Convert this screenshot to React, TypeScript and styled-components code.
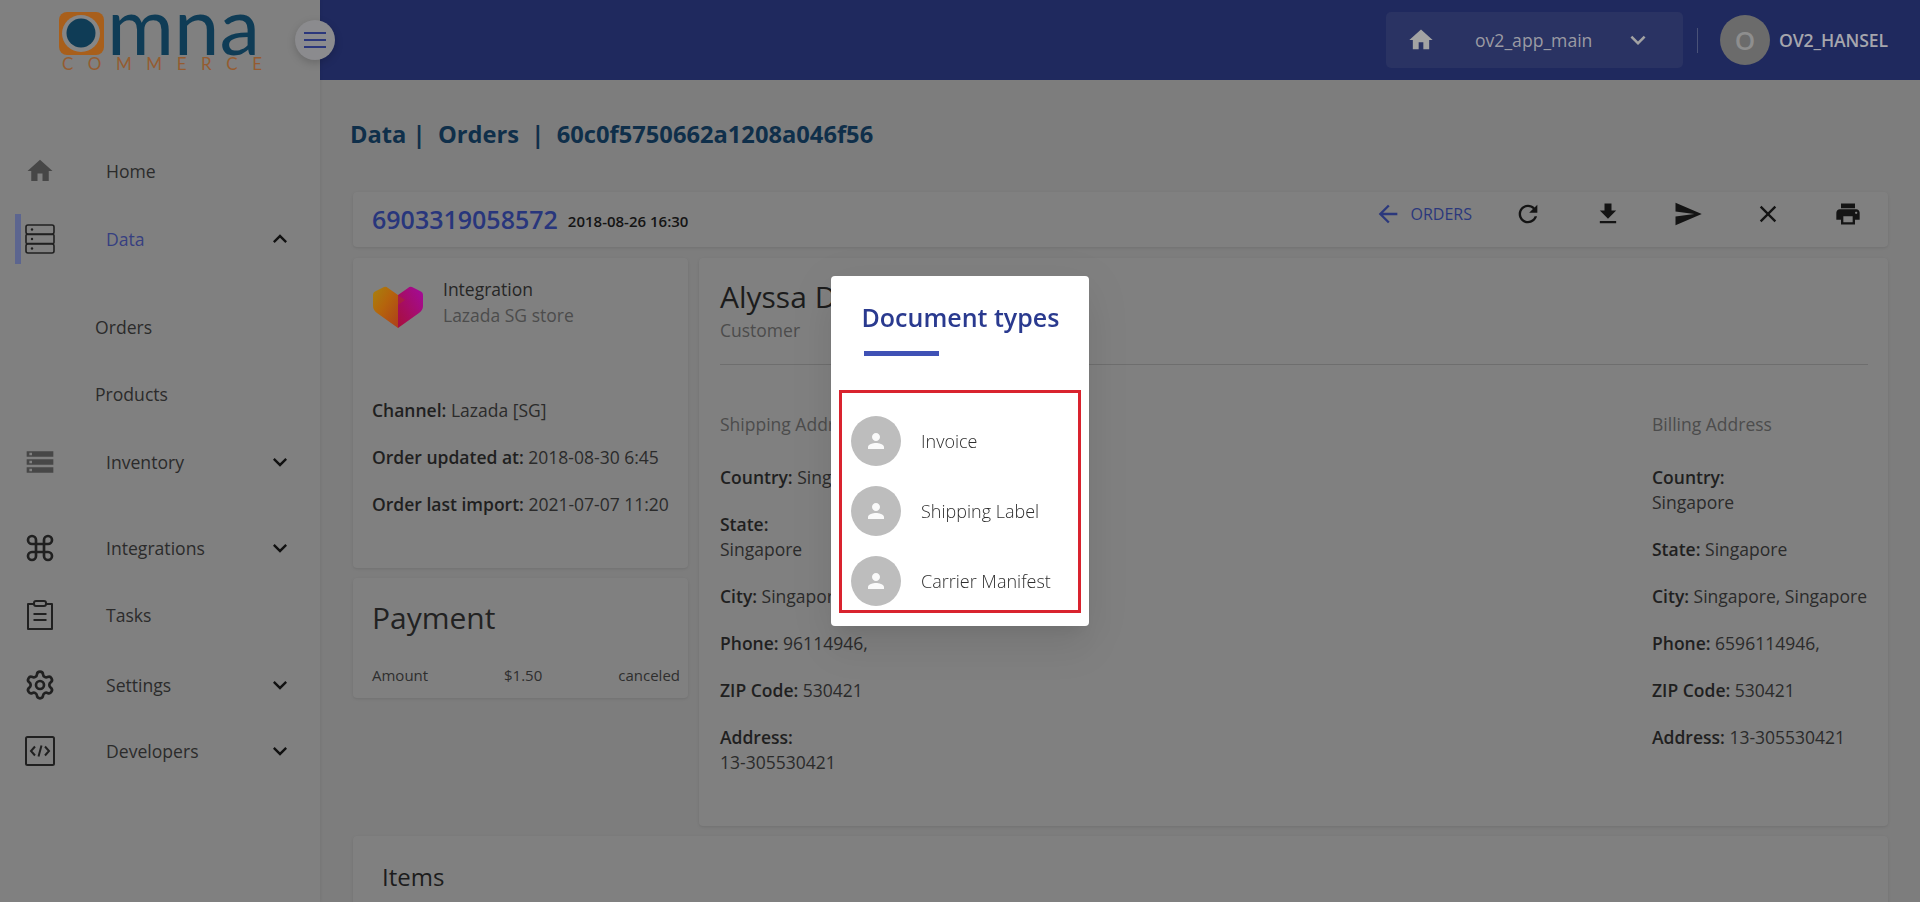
import React from "react";
import styled, { createGlobalStyle } from "styled-components";
import { Settings, Command } from "lucide-react";

const GlobalStyle = createGlobalStyle`
  html, body {
    margin: 0;
    padding: 0;
    height: 902px;
    overflow: hidden;
    background: #7d7d7d;
    font-family: "Open Sans", "Liberation Sans", sans-serif;
    color: #262626;
  }
  * {
    box-sizing: border-box;
  }
`;

const Page = styled.div`
  display: flex;
  width: 1920px;
  height: 902px;
  overflow: hidden;
`;

const Sidebar = styled.aside`
  position: relative;
  width: 320px;
  flex-shrink: 0;
  background: #808080;
  box-shadow: 1px 0 3px rgba(0, 0, 0, 0.06);
  z-index: 1;
`;

const LogoBox = styled.div`
  height: 137px;
  padding: 11px 0 0 58px;
`;

const MenuButton = styled.div`
  position: absolute;
  top: 20px;
  left: 295px;
  width: 40px;
  height: 40px;
  border-radius: 50%;
  background: #8b8b8e;
  box-shadow: 0 3px 8px rgba(0, 0, 0, 0.18);
  display: flex;
  align-items: center;
  justify-content: center;
  color: #2b377c;
`;

const NavRow = styled.div<{ $h: number; $top?: number; $sub?: boolean }>`
  display: flex;
  align-items: center;
  height: ${(p) => p.$h}px;
  margin-top: ${(p) => p.$top || 0}px;
  padding-left: ${(p) => (p.$sub ? 95 : 0)}px;
  padding-right: 26px;
  position: relative;
`;

const ActiveBar = styled.span`
  position: absolute;
  left: 15px;
  top: 9px;
  width: 6px;
  height: 50px;
  background: #5c658f;
`;

const NavIcon = styled.span<{ $soft?: boolean }>`
  width: 80px;
  margin-right: 26px;
  display: flex;
  justify-content: center;
  color: ${(p) => (p.$soft ? "#474747" : "#202020")};
`;

const NavLabel = styled.span<{ $active?: boolean }>`
  font-size: 17.6px;
  font-weight: 400;
  color: ${(p) => (p.$active ? "#363f80" : "#2b2b2b")};
`;

const NavChevron = styled.span`
  margin-left: auto;
  display: flex;
  color: #111;
`;

const Main = styled.main`
  flex: 1;
  min-width: 0;
  display: flex;
  flex-direction: column;
`;

const Header = styled.header`
  height: 80px;
  flex-shrink: 0;
  background: #1f295e;
  display: flex;
  align-items: center;
  justify-content: flex-end;
  padding-right: 32px;
`;

const AppSelect = styled.div`
  width: 297px;
  height: 56px;
  border-radius: 5px;
  background: #2a3363;
  display: flex;
  align-items: center;
  padding-left: 21px;
  color: #a3a3a3;
`;

const AppName = styled.span`
  font-size: 17.6px;
  margin-left: 40px;
  width: 148px;
  color: #9b9ba3;
`;

const HeaderDivider = styled.span`
  width: 1px;
  height: 25px;
  background: #4a5278;
  margin: 0 22px 0 14px;
`;

const UserAvatar = styled.div`
  width: 50px;
  height: 50px;
  border-radius: 50%;
  background: #6b6b6b;
  color: #8e8e8e;
  font-size: 26px;
  font-weight: 600;
  display: flex;
  align-items: center;
  justify-content: center;
  margin-right: 9px;
`;

const UserName = styled.span`
  font-size: 17.6px;
  font-weight: 600;
  color: #a6a6ad;
  letter-spacing: -0.1px;
`;

const Content = styled.div`
  padding: 39px 32px 0 33px;
`;

const Crumbs = styled.h2`
  margin: 0 0 43px -3px;
  font-size: 23.7px;
  line-height: 30px;
  font-weight: 700;
  color: #0f2f4a;
  white-space: pre;
`;

const Card = styled.section<{ $h?: number }>`
  background: #808080;
  border-radius: 4px;
  box-shadow: 0 1px 3px rgba(0, 0, 0, 0.1);
  ${(p) => (p.$h ? `height: ${p.$h}px;` : "")}
`;

const ToolbarCard = styled(Card)`
  height: 55px;
  display: flex;
  align-items: flex-start;
  padding-left: 19px;
`;

const OrderId = styled.span`
  font-size: 25px;
  line-height: 54px;
  font-weight: 600;
  color: #28367c;
`;

const OrderDate = styled.span`
  font-size: 15px;
  line-height: 54px;
  font-weight: 600;
  color: #141414;
  margin: 2px 0 0 10px;
`;

const ToolbarActions = styled.div`
  margin-left: auto;
  display: flex;
  height: 44px;
  align-items: center;
`;

const BackLink = styled.span`
  display: flex;
  align-items: center;
  gap: 9px;
  color: #2b387c;
  font-size: 16px;
  font-weight: 500;
  margin-right: 16px;
`;

const ToolButton = styled.span`
  width: 80px;
  display: flex;
  justify-content: center;
  color: #141414;
`;

const Columns = styled.div`
  display: grid;
  grid-template-columns: 335px 1fr;
  gap: 11px;
  margin-top: 11px;
`;

const LeftColumn = styled.div`
  display: flex;
  flex-direction: column;
  gap: 10px;
`;

const IntegrationCard = styled(Card)`
  padding: 22px 19px 0;
`;

const IntegrationHead = styled.div`
  display: flex;
  gap: 19px;
  margin-bottom: 70px;
  padding-top: 6px;
`;

const IntegrationText = styled.div`
  margin-top: -10px;
  font-size: 17.5px;
  line-height: 26px;
`;

const Muted = styled.div`
  color: #4c4c4c;
`;

const Line = styled.div`
  font-size: 17.5px;
  line-height: 25px;
  margin-bottom: 22px;
  color: #2b2b2b;
  white-space: nowrap;
  b {
    font-weight: 600;
    color: #1f1f1f;
  }
`;

const PaymentCard = styled(Card)`
  padding: 20px 8px 0 19px;
`;

const PaymentTitle = styled.h3`
  margin: 0 0 27px;
  font-size: 30px;
  line-height: 40px;
  font-weight: 400;
  color: #222;
`;

const PaymentRow = styled.div`
  display: grid;
  grid-template-columns: 132px 1fr auto;
  font-size: 15px;
  line-height: 20px;
  color: #2e2e2e;
`;

const CustomerCard = styled(Card)`
  padding: 20px 20px 0 21px;
`;

const CustomerName = styled.h3`
  margin: 0;
  font-size: 30px;
  line-height: 38px;
  font-weight: 400;
  color: #1c1c1c;
`;

const CustomerRole = styled(Muted)`
  font-size: 17.5px;
  line-height: 24px;
  margin-top: 2px;
  padding-bottom: 22px;
  border-bottom: 1px solid #6e6e6e;
  margin-bottom: 47px;
`;

const Addresses = styled.div`
  display: flex;
  justify-content: space-between;
`;

const AddressTitle = styled(Muted)`
  font-size: 17.5px;
  line-height: 25px;
  margin-bottom: 28px;
`;

const AddressBlock = styled.div<{ $w: number }>`
  width: ${(p) => p.$w}px;
`;

const ItemsCard = styled(Card)`
  margin-top: 10px;
  height: 120px;
  padding: 27px 29px;
  font-size: 24px;
  line-height: 28px;
  font-weight: 500;
  color: #1c1c1c;
`;

const Backdrop = styled.div`
  position: fixed;
  inset: 0;
  z-index: 5;
`;

const Dialog = styled.div`
  position: absolute;
  left: 831px;
  top: 276px;
  width: 258px;
  height: 350px;
  background: #fff;
  border-radius: 4px;
  box-shadow: 0 11px 15px -7px rgba(0, 0, 0, 0.07),
    0 24px 38px 3px rgba(0, 0, 0, 0.05), 0 9px 46px 8px rgba(0, 0, 0, 0.04);
  padding: 24px 8px 0;
`;

const DialogTitle = styled.h2`
  margin: 0 0 0 22.5px;
  font-size: 25px;
  line-height: 34px;
  font-weight: 600;
  color: #2a3a8f;
  white-space: nowrap;
`;

const DialogRule = styled.div`
  width: 75px;
  height: 5px;
  margin: 17px 0 34px 25px;
  background: #3f51b5;
`;

const DocList = styled.ul`
  list-style: none;
  margin: 0;
  padding: 23px 0 4px 9px;
  height: 223px;
  border: 3px solid #d9232e;
`;

const DocItem = styled.li`
  display: flex;
  align-items: center;
  gap: 20px;
  height: 50px;
  margin-bottom: 20px;
  font-size: 18px;
  font-weight: 300;
  color: #2e2e2e;
  white-space: nowrap;
`;

const DocAvatar = styled.span`
  width: 50px;
  height: 50px;
  border-radius: 50%;
  background: #bdbdbd;
  color: #fafafa;
  display: flex;
  align-items: center;
  justify-content: center;
`;

const M = ({ d, size = 24 }: { d: string; size?: number }) => (
  <svg width={size} height={size} viewBox="0 0 24 24" fill="currentColor">
    <path d={d} />
  </svg>
);

const homePath = "M10 20v-6h4v6h5v-8h3L12 3 2 12h3v8z";
const downPath = "M16.59 8.59L12 13.17 7.41 8.59 6 10l6 6 6-6z";
const upPath = "M12 8l-6 6 1.41 1.41L12 10.83l4.59 4.58L18 14z";

const Logo = () => (
  <svg width="208" height="64" viewBox="0 0 208 64">
    <rect x="1" y="1" width="45" height="43" rx="8" fill="#a85f1b" />
    <ellipse cx="23" cy="22.5" rx="19" ry="18.5" fill="#868686" />
    <circle cx="23" cy="22" r="14.5" fill="#0f3c56" />
    <text
      x="49"
      y="44"
      fontFamily="Lato, sans-serif"
      fontSize="80"
      fill="#0f3c56"
      textLength="153"
      lengthAdjust="spacingAndGlyphs"
    >
      mna
    </text>
    <text
      x="4"
      y="59"
      fontFamily="Lato, sans-serif"
      fontSize="17"
      fill="#955c30"
      textLength="200"
    >
      COMMERCE
    </text>
  </svg>
);

const ServerIcon = () => (
  <svg width="32" height="32" viewBox="0 0 32 32" fill="none" stroke="currentColor" strokeWidth="1.6">
    <rect x="2" y="2" width="28" height="9" rx="2" />
    <rect x="2" y="11.5" width="28" height="9" rx="1" />
    <rect x="2" y="21" width="28" height="9" rx="2" />
    <circle cx="8" cy="6.5" r="1.2" fill="currentColor" stroke="none" />
    <circle cx="8" cy="16" r="1.2" fill="currentColor" stroke="none" />
    <circle cx="8" cy="25.5" r="1.2" fill="currentColor" stroke="none" />
  </svg>
);

const ClipboardIcon = () => (
  <svg width="32" height="32" viewBox="0 0 32 32" fill="none" stroke="currentColor" strokeWidth="2">
    <path d="M10 5H4v25h24V5h-6" strokeLinejoin="round" />
    <rect x="10" y="2" width="12" height="5" rx="2" />
    <path d="M9.5 15h13M9.5 21h13" />
  </svg>
);

const CodeIcon = () => (
  <svg width="32" height="32" viewBox="0 0 32 32" fill="none" stroke="currentColor" strokeWidth="2">
    <rect x="2" y="2" width="28" height="28" rx="1.5" />
    <path d="M11 11.5L7 16l4 4.5M21 11.5l4 4.5-4 4.5M17.5 10.5l-3 11" />
  </svg>
);

const HeartLogo = () => (
  <svg width="52" height="42" viewBox="0 0 52 42">
    <defs>
      <linearGradient id="hl" x1="0" y1="0" x2="1" y2="1">
        <stop offset="0" stopColor="#a6820e" />
        <stop offset="0.45" stopColor="#b5640c" />
        <stop offset="1" stopColor="#ad3f1a" />
      </linearGradient>
      <linearGradient id="hr" x1="1" y1="0" x2="0" y2="1">
        <stop offset="0" stopColor="#a30a9c" />
        <stop offset="1" stopColor="#a80f3a" />
      </linearGradient>
    </defs>
    <path d="M12 1Q14 0 16 2L26 9V42L5 27Q1 24 1 20V9Q1 6 4 5z" fill="url(#hl)" />
    <path d="M40 1Q38 0 36 2L26 9V42L47 27Q51 24 51 20V9Q51 6 48 5z" fill="url(#hr)" />
    <path d="M26 9L33 14L26 19z" fill="#b0361a" opacity="0.4" />
  </svg>
);

type NavEntry = {
  label: string;
  h: number;
  top?: number;
  sub?: boolean;
  chevron?: "up" | "down";
  active?: boolean;
  soft?: boolean;
  icon?: React.ReactNode;
};

const navItems: NavEntry[] = [
  { label: "Home", h: 68, soft: true, icon: <M d={homePath} size={30} /> },
  { label: "Data", h: 68, active: true, chevron: "up", icon: <ServerIcon /> },
  { label: "Orders", h: 67, top: 20, sub: true },
  { label: "Products", h: 68, sub: true },
  {
    label: "Inventory",
    h: 68,
    chevron: "down",
    soft: true,
    icon: (
      <M
        size={32}
        d="M2 20h20v-4H2v4zm2-3h2v2H4v-2zM2 4v4h20V4H2zm4 3H4V5h2v2zm-4 7h20v-4H2v4zm2-3h2v2H4v-2z"
      />
    ),
  },
  { label: "Integrations", h: 68, top: 18, chevron: "down", icon: <Command size={32} strokeWidth={2} /> },
  { label: "Tasks", h: 66, icon: <ClipboardIcon /> },
  { label: "Settings", h: 68, top: 3, chevron: "down", icon: <Settings size={32} strokeWidth={2} /> },
  { label: "Developers", h: 64, chevron: "down", icon: <CodeIcon /> },
];

const shipping: [string, string, boolean?][] = [
  ["Country:", "Singapore"],
  ["State:", "Singapore", true],
  ["City:", "Singapore, Singapore"],
  ["Phone:", "96114946,"],
  ["ZIP Code:", "530421"],
  ["Address:", "13-305530421", true],
];

const billing: [string, string, boolean?][] = [
  ["Country:", "Singapore", true],
  ["State:", "Singapore"],
  ["City:", "Singapore, Singapore"],
  ["Phone:", "6596114946,"],
  ["ZIP Code:", "530421"],
  ["Address:", "13-305530421"],
];

const AddressLines = ({ rows }: { rows: [string, string, boolean?][] }) => (
  <>
    {rows.map(([k, v, wrap]) => (
      <Line key={k}>
        <b>{k}</b> {wrap && <br />}
        {v}
      </Line>
    ))}
  </>
);

export default function App() {
  return (
    <Page>
      <GlobalStyle />
      <Sidebar>
        <LogoBox>
          <Logo />
        </LogoBox>
        <MenuButton>
          <svg width="24" height="24" viewBox="0 0 24 24" fill="none" stroke="currentColor" strokeWidth="2">
            <path d="M1 5h22M1 12h22M1 19h22" />
          </svg>
        </MenuButton>
        <nav>
          {navItems.map((item) => (
            <NavRow key={item.label} $h={item.h} $top={item.top} $sub={item.sub}>
              {item.active && <ActiveBar />}
              {item.icon && <NavIcon $soft={item.soft}>{item.icon}</NavIcon>}
              <NavLabel $active={item.active}>{item.label}</NavLabel>
              {item.chevron && (
                <NavChevron>
                  <M d={item.chevron === "up" ? upPath : downPath} size={28} />
                </NavChevron>
              )}
            </NavRow>
          ))}
        </nav>
      </Sidebar>
      <Main>
        <Header>
          <AppSelect>
            <M d={homePath} size={28} />
            <AppName>ov2_app_main</AppName>
            <M d={downPath} size={30} />
          </AppSelect>
          <HeaderDivider />
          <UserAvatar>O</UserAvatar>
          <UserName>OV2_HANSEL</UserName>
        </Header>
        <Content>
          <Crumbs>{"Data |  Orders  |  60c0f5750662a1208a046f56"}</Crumbs>
          <ToolbarCard>
            <OrderId>6903319058572</OrderId>
            <OrderDate>2018-08-26 16:30</OrderDate>
            <ToolbarActions>
              <BackLink>
                <M d="M20 11H7.83l5.59-5.59L12 4l-8 8 8 8 1.41-1.41L7.83 13H20v-2z" size={28} />
                ORDERS
              </BackLink>
              <ToolButton>
                <M d="M17.65 6.35C16.2 4.9 14.21 4 12 4c-4.42 0-7.99 3.58-7.99 8s3.57 8 7.99 8c3.73 0 6.84-2.55 7.73-6h-2.08c-.82 2.33-3.04 4-5.65 4-3.31 0-6-2.69-6-6s2.69-6 6-6c1.66 0 3.14.69 4.22 1.78L13 11h7V4l-2.35 2.35z" size={28} />
              </ToolButton>
              <ToolButton>
                <M d="M19 9h-4V3H9v6H5l7 7 7-7zM5 18v2h14v-2H5z" size={28} />
              </ToolButton>
              <ToolButton>
                <M d="M2.01 21L23 12 2.01 3 2 10l15 2-15 2z" size={30} />
              </ToolButton>
              <ToolButton>
                <M d="M19 6.41L17.59 5 12 10.59 6.41 5 5 6.41 10.59 12 5 17.59 6.41 19 12 13.41 17.59 19 19 17.59 13.41 12z" size={28} />
              </ToolButton>
              <ToolButton>
                <M d="M19 8H5c-1.66 0-3 1.34-3 3v6h4v4h12v-4h4v-6c0-1.66-1.34-3-3-3zm-3 11H8v-5h8v5zm3-7c-.55 0-1-.45-1-1s.45-1 1-1 1 .45 1 1-.45 1-1 1zm-1-9H6v4h12V3z" size={28} />
              </ToolButton>
            </ToolbarActions>
          </ToolbarCard>
          <Columns>
            <LeftColumn>
              <IntegrationCard $h={310}>
                <IntegrationHead>
                  <HeartLogo />
                  <IntegrationText>
                    <div>Integration</div>
                    <Muted>Lazada SG store</Muted>
                  </IntegrationText>
                </IntegrationHead>
                <Line>
                  <b>Channel:</b> Lazada [SG]
                </Line>
                <Line>
                  <b>Order updated at:</b> 2018-08-30 6:45
                </Line>
                <Line>
                  <b>Order last import:</b> 2021-07-07 11:20
                </Line>
              </IntegrationCard>
              <PaymentCard $h={120}>
                <PaymentTitle>Payment</PaymentTitle>
                <PaymentRow>
                  <span>Amount</span>
                  <span>$1.50</span>
                  <span>canceled</span>
                </PaymentRow>
              </PaymentCard>
            </LeftColumn>
            <CustomerCard $h={568}>
              <CustomerName>Alyssa D</CustomerName>
              <CustomerRole>Customer</CustomerRole>
              <Addresses>
                <AddressBlock $w={300}>
                  <AddressTitle>Shipping Address</AddressTitle>
                  <AddressLines rows={shipping} />
                </AddressBlock>
                <AddressBlock $w={216}>
                  <AddressTitle>Billing Address</AddressTitle>
                  <AddressLines rows={billing} />
                </AddressBlock>
              </Addresses>
            </CustomerCard>
          </Columns>
          <ItemsCard>Items</ItemsCard>
        </Content>
      </Main>
      <Backdrop>
        <Dialog>
          <DialogTitle>Document types</DialogTitle>
          <DialogRule />
          <DocList>
            {["Invoice", "Shipping Label", "Carrier Manifest"].map((doc) => (
              <DocItem key={doc}>
                <DocAvatar>
                  <M d="M12 12c2.21 0 4-1.79 4-4s-1.79-4-4-4-4 1.79-4 4 1.79 4 4 4zm0 2c-2.67 0-8 1.34-8 4v2h16v-2c0-2.66-5.33-4-8-4z" />
                </DocAvatar>
                {doc}
              </DocItem>
            ))}
          </DocList>
        </Dialog>
      </Backdrop>
    </Page>
  );
}
